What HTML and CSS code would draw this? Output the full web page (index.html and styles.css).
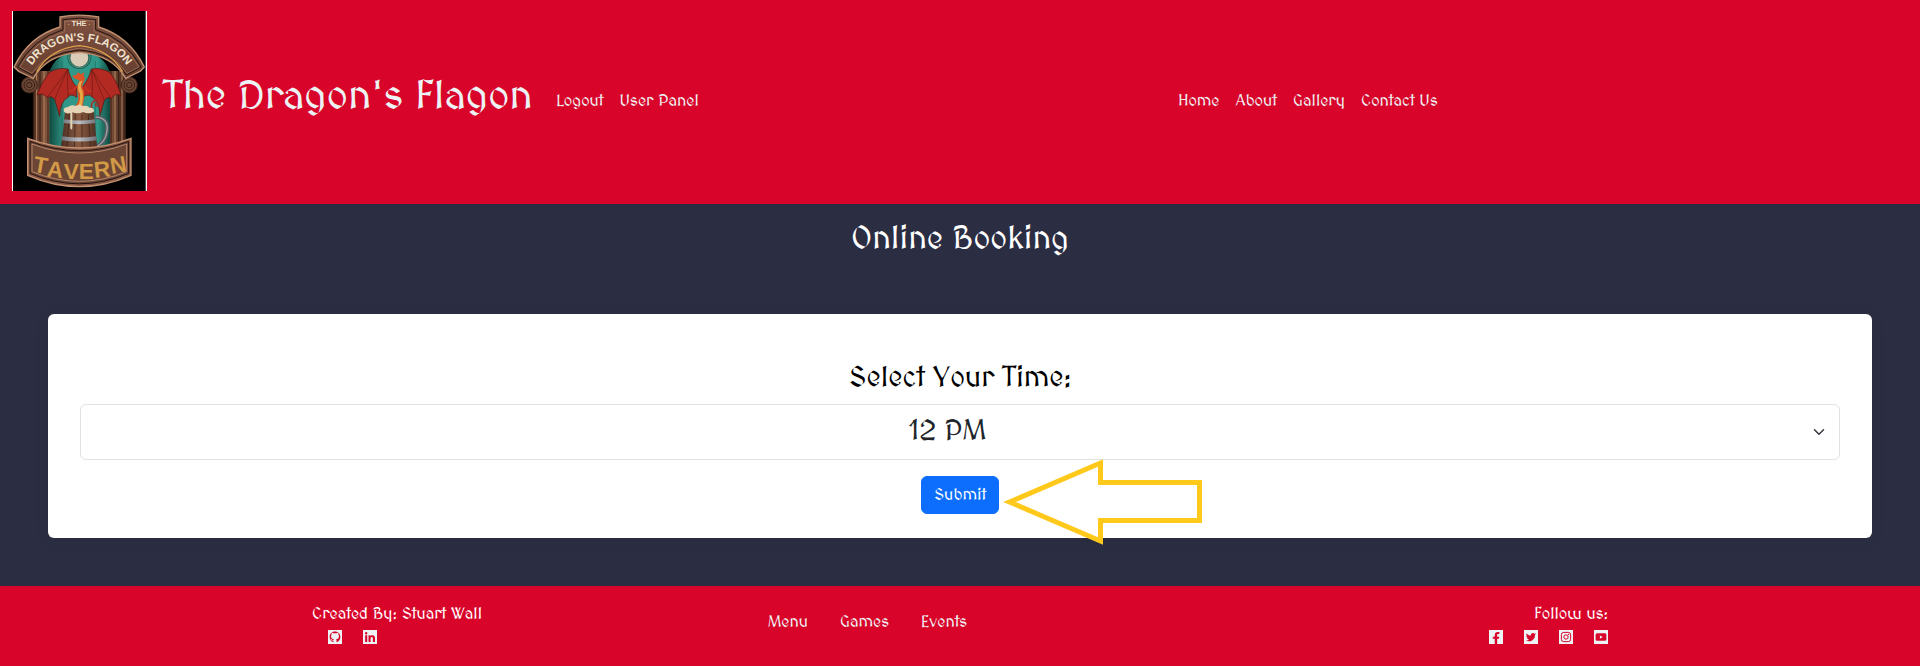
FILE: index.html
```html
<!DOCTYPE html>
<html lang="en">
<head>
<meta charset="utf-8">
<meta name="viewport" content="width=device-width, initial-scale=1">
<title>The Dragon's Flagon - Online Booking</title>
<link rel="stylesheet" href="styles.css">
</head>
<body>
<header class="site-header">
  <div class="brand-side">
    <a class="logo-link" href="#" aria-label="The Dragon's Flagon home">
      <svg class="logo" viewBox="0 0 405 540" role="img" aria-label="The Dragon's Flagon Tavern">
        <defs>
          <linearGradient id="wood" x1="0" x2="0" y1="0" y2="1"><stop offset="0" stop-color="#805242"/><stop offset="1" stop-color="#653d2e"/></linearGradient>
          <linearGradient id="post"><stop offset="0" stop-color="#4f2d20"/><stop offset=".25" stop-color="#a87253"/><stop offset=".5" stop-color="#5c3829"/><stop offset=".75" stop-color="#9a684c"/><stop offset="1" stop-color="#3f241a"/></linearGradient>
          <linearGradient id="keg"><stop offset="0" stop-color="#4b2e22"/><stop offset=".5" stop-color="#8a5b41"/><stop offset="1" stop-color="#4b2e22"/></linearGradient>
          <linearGradient id="steel"><stop offset="0" stop-color="#6d7178"/><stop offset=".5" stop-color="#b9bcc2"/><stop offset="1" stop-color="#6d7178"/></linearGradient>
          <linearGradient id="teal"><stop offset="0" stop-color="#11493f"/><stop offset=".25" stop-color="#2f9888"/><stop offset=".8" stop-color="#2f9888"/><stop offset="1" stop-color="#11493f"/></linearGradient>
          <path id="arc" d="M46 186Q98 90 202 90Q306 90 358 186"/>
        </defs>
        <rect width="405" height="540" fill="#fff"/>
        <rect x="3" width="398" height="540"/>
        <path d="M64 180H342V420H64Z" fill="url(#post)"/>
        <path d="M112 410V185Q125 130 202 120Q280 130 294 185V410Z" fill="url(#teal)"/>
        <path d="M130 170V400M150 150V400M250 150V400M272 165V400" stroke="#1c6b5e" stroke-width="2"/>
        <path d="M64 190V400M340 190V400M84 180V400M320 180V400M108 180V405M297 180V405" stroke="#321b13" stroke-width="3"/>
        <path d="M74 190V395M96 180V400M309 180V400M330 180V400" stroke="#b98561" stroke-width="3"/>
        <circle cx="202" cy="138" r="36" fill="#176557"/>
        <circle cx="202" cy="138" r="32" fill="none" stroke="#7fa08e" stroke-width="2"/>
        <circle cx="202" cy="140" r="27" fill="#d9cbb6"/>
        <g fill="#6a4634" stroke="#3a2118" stroke-width="3">
          <circle cx="52" cy="222" r="24"/><circle cx="352" cy="222" r="24"/>
          <circle cx="52" cy="222" r="16"/><circle cx="352" cy="222" r="16"/>
          <circle cx="52" cy="222" r="8"/><circle cx="352" cy="222" r="8"/>
        </g>
        <path d="M6 168Q50 76 144 48V18Q202 7 260 18V48Q352 76 397 168L386 180L341 202Q302 132 202 124Q102 132 64 202L20 181Z" fill="url(#wood)" stroke="#c39272" stroke-width="4"/>
        <path d="M17 168Q60 85 153 56V26Q202 17 251 26V56Q342 84 387 168L343 192Q300 124 202 117Q106 124 62 192Z" fill="none" stroke="#241410" stroke-width="3"/>
        <path d="M23 168Q64 90 158 62V31Q202 23 246 31V62Q338 88 381 168L345 187Q302 120 202 112Q102 120 60 187Z" fill="none" stroke="#ae7c60" stroke-width="2"/>
        <path d="M74 182Q116 112 202 104Q288 112 332 182" fill="none" stroke="#dca04b" stroke-width="4"/>
        <text class="logo-the" x="201" y="46">THE</text>
        <text class="logo-name"><textPath href="#arc" startOffset="50%">DRAGON'S FLAGON</textPath></text>
        <circle cx="170" cy="40" r="2" fill="#dca04b"/><circle cx="232" cy="40" r="2" fill="#dca04b"/>
        <g fill="#b22a22" stroke="#56130f" stroke-width="2">
          <path d="M194 228Q176 208 168 174Q140 168 112 184Q88 215 75 252Q94 244 105 260Q118 252 128 265L143 316Q144 270 169 258Q177 246 194 259Z"/>
          <path d="M211 228Q229 208 238 174Q265 168 293 184Q317 215 327 254Q309 244 298 263Q287 254 277 268L264 314Q263 270 240 258Q230 246 211 259Z"/>
        </g>
        <path d="M168 174Q143 210 105 260M168 174Q146 220 128 265M168 174Q164 219 169 258M238 174Q260 210 298 263M238 174Q258 220 277 268M238 174Q244 220 240 258" fill="none" stroke="#6e1a14" stroke-width="2"/>
        <path d="M240 294C230 260 270 265 264 281C260 290 246 282 253 277" fill="none" stroke="#a4352c" stroke-width="5" stroke-linecap="round"/>
        <path d="M190 284Q202 272 198 250Q190 220 204 210L186 201L180 194L192 192L198 184L207 190L217 184L215 194Q222 202 215 213Q207 225 216 239Q218 265 212 280L219 289Z" fill="#d95426"/>
        <path d="M202 212Q193 230 204 248Q206 268 199 286H209Q216 260 211 240Q202 224 212 209Z" fill="#e5a844"/>
        <path d="M195 225Q182 245 171 238M217 225Q229 246 238 238" fill="none" stroke="#c73422" stroke-width="5"/>
        <path d="M251 318Q290 320 285 360Q281 393 253 407" fill="none" stroke="#555b61" stroke-width="12"/>
        <path d="M251 318Q290 320 285 360Q281 393 253 407" fill="none" stroke="#9da4a8" stroke-width="4"/>
        <path d="M159 300H246Q249 350 256 411H146Q155 355 159 300Z" fill="url(#keg)"/>
        <path d="M172 310L165 408M190 310L187 408M210 310V408M229 310L235 408" stroke="#392016" stroke-width="2"/>
        <path d="M157 325Q203 332 249 325L251 336Q203 343 154 336ZM150 376Q202 383 253 376L254 388Q202 395 148 388Z" fill="url(#steel)"/>
        <path d="M156 302Q151 290 168 288Q178 280 192 285Q202 276 212 285Q226 282 233 290Q249 290 245 303Q228 311 214 303Q197 310 181 304L181 352Q178 360 175 351V306Q163 310 156 302Z" fill="#e5d5b6"/>
        <path d="M47 382Q202 440 357 382V493Q202 561 47 493Z" fill="#8a5945" stroke="#c39272" stroke-width="4"/>
        <path d="M54 391Q202 447 350 391V487Q202 550 54 487Z" fill="#6d4535" stroke="#24140f" stroke-width="3"/>
        <path d="M60 399Q202 453 344 399V482Q202 540 60 482Z" fill="none" stroke="#b4866a" stroke-width="3"/>
        <g class="logo-tavern"><text x="88" y="486" transform="rotate(10 88 450)">T</text><text x="131" y="499" transform="rotate(6 131 465)">A</text><text x="178" y="505">V</text><text x="223" y="505">E</text><text x="269" y="499" transform="rotate(-6 269 465)">R</text><text x="317" y="485" transform="rotate(-10 317 450)">N</text></g>
      </svg>
    </a>
    <a class="site-name" href="#">The Dragon's Flagon</a>
    <nav class="nav" aria-label="Account"><a href="#">Logout</a><a href="#">User Panel</a></nav>
  </div>
  <nav class="nav" aria-label="Main"><a href="#">Home</a><a href="#">About</a><a href="#">Gallery</a><a href="#">Contact Us</a></nav>
</header>

<main class="booking">
  <h1 class="page-title">Online Booking</h1>
  <form class="card">
    <label class="field-label" for="time">Select Your Time:</label>
    <div class="select-wrap">
      <select class="time-select" id="time" name="time"><option>12 PM</option><option>1 PM</option><option>2 PM</option><option>3 PM</option></select>
      <svg class="chevron" viewBox="0 0 16 16" aria-hidden="true"><path d="m2 5 6 6 6-6"/></svg>
    </div>
    <div class="submit-wrap">
      <button class="submit" type="submit">Submit</button>
      <svg class="arrow" viewBox="0 0 200 88" aria-hidden="true"><path d="M6.500 44 97.500 5V24.500H196.500V62.500H97.500V83Z"/></svg>
    </div>
  </form>
</main>

<footer class="site-footer">
  <div class="footer-grid">
    <div class="credits">
      <p class="footer-text">Created By: Stuart Wall</p>
      <div class="icons">
        <a href="#" aria-label="GitHub"><svg viewBox="0 32 448 448"><path d="M0 32h448v448H0z"/><path class="cut" d="M176 424v-48c-55 12-69-24-80-38-9-12-18-14-18-20 20-8 34 5 43 19 13 20 30 24 55 17 2-13 8-22 15-28-55-7-94-30-94-96 0-26 9-45 23-61-4-13-7-31 2-53 20 0 39 10 56 22 30-8 62-8 92 0 17-12 36-22 56-22 9 22 6 40 2 53 14 16 23 35 23 61 0 66-39 89-94 96 12 10 16 25 16 48v50c79-28 123-89 123-168 0-101-76-176-172-176S52 155 52 256c0 79 45 140 124 168z"/></svg></a>
        <a href="#" aria-label="LinkedIn"><svg viewBox="0 32 448 448"><path d="M0 32h448v448H0z"/><path class="cut" d="M69 202h66v214H69zM102 96a38 38 0 1 1 0 77 38 38 0 0 1 0-77zM177 202h64v29c9-17 31-35 63-35 67 0 80 44 80 102v118h-67V312c0-25 0-57-35-57s-39 27-39 55v106h-66z"/></svg></a>
      </div>
    </div>
    <nav class="footer-nav" aria-label="Footer"><a href="#">Menu</a><a href="#">Games</a><a href="#">Events</a></nav>
    <div class="follow">
      <p class="footer-text">Follow us:</p>
      <div class="icons">
        <a href="#" aria-label="Facebook"><svg viewBox="0 32 448 448"><path d="M0 32h448v448H0z"/><path class="cut" d="M184 480V315h-63v-71h63v-54c0-62 37-96 93-96 27 0 55 5 55 5v61h-31c-31 0-40 19-40 38v46h68l-11 71h-57v165z"/></svg></a>
        <a href="#" aria-label="Twitter"><svg viewBox="0 32 448 448"><path d="M0 32h448v448H0z"/><path class="cut" d="M384 158c-12 6-25 9-38 11 14-8 24-21 29-36-13 8-27 13-42 16a66 66 0 0 0-113 60c-54-3-103-29-136-69-18 31-8 69 20 88-11 0-21-3-30-8 0 32 22 59 53 66-10 2-20 3-30 1 9 26 34 45 62 46-29 22-61 31-97 27a187 187 0 0 0 289-166c13-10 24-22 33-36z"/></svg></a>
        <a href="#" aria-label="Instagram"><svg viewBox="0 32 448 448"><path d="M0 32h448v448H0z"/><rect class="ring" x="76" y="108" width="296" height="296" rx="76"/><circle class="ring" cx="224" cy="256" r="69"/><circle class="cut" cx="306" cy="174" r="20"/></svg></a>
        <a href="#" aria-label="YouTube"><svg viewBox="0 32 448 448"><path d="M0 32h448v448H0z"/><rect class="cut" x="52" y="136" width="344" height="240" rx="48"/><path d="m188 204 94 52-94 52z"/></svg></a>
      </div>
    </div>
  </div>
</footer>
</body>
</html>
```
FILE: styles.css
```css
* { box-sizing: border-box; }

body {
  margin: 0;
  min-height: 100vh;
  display: flex;
  flex-direction: column;
  background: #2b2d42;
  color: #edf2f4;
  font-family: MedievalSharp, "Liberation Sans", Arial, sans-serif;
  font-size: 16px;
  line-height: 24px;
}

a { color: inherit; text-decoration: none; }
p { margin: 0; }

.site-header {
  display: grid;
  grid-template-columns: 607fr 393fr;
  align-items: center;
  padding: 11px 0 13px 12px;
  background: #d90429;
}

.brand-side { display: flex; align-items: center; }
.logo-link { margin-right: 16px; }
.logo { display: block; width: 135px; height: 180px; }
.logo-the { font: bold 22px "Liberation Sans Narrow", "Liberation Sans", sans-serif; fill: #eee2ce; text-anchor: middle; }
.logo-name { font: bold 34px "Liberation Sans Narrow", "Liberation Sans", sans-serif; fill: #eee2ce; text-anchor: middle; }
.logo-tavern { font: bold 68px "Liberation Sans Narrow", "Liberation Sans", sans-serif; fill: #d29a47; text-anchor: middle; }

.site-name { margin-right: 16px; padding-bottom: 8px; font-size: 40px; line-height: 48px; }

.nav { display: flex; }
.nav a { padding: 8px; }

.booking { flex: 1; padding: 16px 48px 48px; }

.page-title {
  margin: 0 0 56px;
  color: #fff;
  font-size: 32px;
  font-weight: 400;
  line-height: 38px;
  text-align: center;
}

.card {
  padding: 48px 32px 24px;
  border-radius: 6px;
  background: #fff;
  box-shadow: 0 2px 16px rgba(0, 0, 0, 0.06);
  text-align: center;
}

.field-label { display: block; margin-bottom: 8px; color: #000; font-size: 28px; line-height: 34px; }

.select-wrap { position: relative; }

.time-select {
  display: block;
  width: 100%;
  height: 56px;
  padding: 6px 36px 8px 12px;
  border: 1px solid #dee2e6;
  border-radius: 6px;
  appearance: none;
  background: #fff;
  color: #212529;
  font-family: inherit;
  font-size: 28px;
  text-align: center;
  text-align-last: center;
}

.chevron {
  position: absolute;
  top: 22px;
  right: 15px;
  width: 12px;
  height: 12px;
  fill: none;
  stroke: #343a40;
  stroke-width: 2;
  stroke-linecap: round;
  stroke-linejoin: round;
  pointer-events: none;
}

.submit-wrap { position: relative; width: fit-content; margin: 16px auto 0; }

.submit {
  display: block;
  padding: 6px 12px;
  border: 1px solid #0d6efd;
  border-radius: 6px;
  background: #0d6efd;
  color: #fff;
  font-family: inherit;
  font-size: 16px;
  line-height: 24px;
}

.arrow {
  position: absolute;
  top: -18px;
  left: 82px;
  width: 200px;
  height: 88px;
  fill: none;
  stroke: #ffc91c;
  stroke-width: 5;
}

.site-footer { padding: 16px 0 22px; background: #d90429; }

.footer-grid {
  display: grid;
  grid-template-columns: repeat(3, 1fr);
  width: 1320px;
  max-width: 100%;
  margin: 0 auto;
}

.credits, .follow { padding: 0 12px; }
.follow { display: flex; flex-direction: column; align-items: flex-end; }
.footer-text { color: #fff; }
.icons { display: flex; gap: 21px; padding-top: 4px; }
.credits .icons { padding-left: 16px; }
.icons svg { display: block; width: 14px; height: 14px; fill: #edf2f4; }
.icons .cut { fill: #d90429; }
.icons .ring { fill: none; stroke: #d90429; stroke-width: 32; }

.footer-nav { display: flex; padding: 8px 12px; }
.footer-nav a { padding: 0 16px; }
```
